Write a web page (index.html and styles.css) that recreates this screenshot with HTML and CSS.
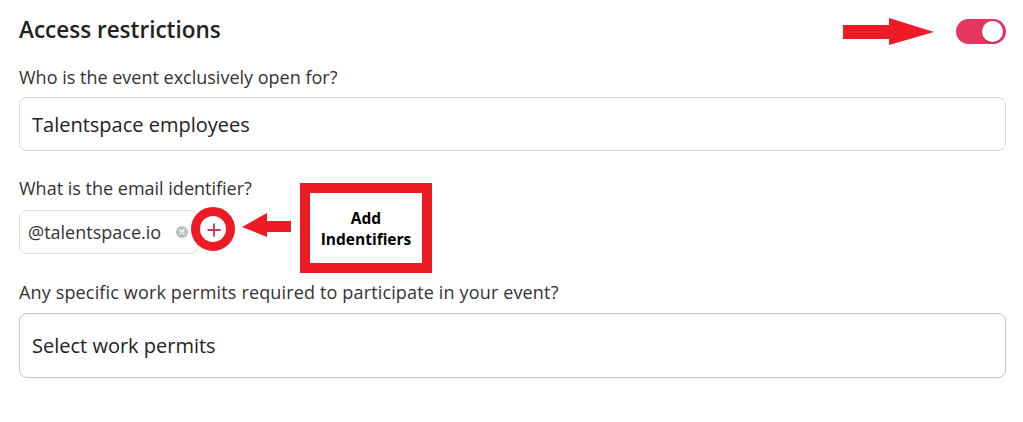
FILE: index.html
```html
<!DOCTYPE html>
<html lang="en">
<head>
<meta charset="utf-8">
<title>Access restrictions</title>
<link rel="stylesheet" href="styles.css">
</head>
<body>
<main class="panel">
  <div class="header">
    <h2 class="title">Access restrictions</h2>
    <span class="toggle"><span class="knob"></span></span>
  </div>

  <label class="label label-first">Who is the event exclusively open for?</label>
  <div class="input input-org">Talentspace employees</div>

  <label class="label label-email">What is the email identifier?</label>
  <div class="chip-row">
    <span class="chip">@talentspace.io<span class="chip-x"><svg viewBox="0 0 12 12" width="12" height="12"><circle cx="6" cy="6" r="6" fill="#bdbdbd"/><path d="M4 4 L8 8 M8 4 L4 8" stroke="#fff" stroke-width="1.4" stroke-linecap="round"/></svg></span></span>
    <button class="add-btn" type="button"><svg viewBox="0 0 14 14" width="14" height="14"><path d="M7 0.5 V13.5 M0.5 7 H13.5" stroke="#c8325c" stroke-width="1.8"/></svg></button>
  </div>

  <label class="label label-permits">Any specific work permits required to participate in your event?</label>
  <div class="input input-select">Select work permits</div>

  <svg class="arrow arrow-top" viewBox="0 0 91 27" width="91" height="27"><path d="M0 7 H46 V0 L91 14 L46 27 V21 H0 Z" fill="#ed1c24"/></svg>
  <span class="ring"></span>
  <svg class="arrow arrow-left" viewBox="0 0 49 24" width="49" height="24"><path d="M0 14 L25 0 V8 H49 V19 H25 V24 Z" fill="#ed1c24"/></svg>
  <div class="callout">Add<br>Indentifiers</div>
</main>
</body>
</html>
```

FILE: styles.css
```css
* { box-sizing: border-box; }

body {
  margin: 0;
  background: #ffffff;
  font-family: "Open Sans", "Noto Sans", sans-serif;
  color: #333333;
}

.panel {
  position: relative;
  width: 1006px;
  padding: 13px 0 40px 19px;
}

.header {
  display: flex;
  justify-content: space-between;
  align-items: flex-start;
  height: 33px;
}

.title {
  margin: 0;
  font-size: 22.5px;
  line-height: 34px;
  font-weight: 600;
  color: #222222;
}

.toggle {
  position: relative;
  display: block;
  width: 50px;
  height: 25px;
  margin-top: 6px;
  border-radius: 13px;
  background: #e73761;
}

.knob {
  position: absolute;
  top: 2px;
  right: 3px;
  width: 21px;
  height: 21px;
  border-radius: 50%;
  background: #ffffff;
  box-shadow: 0 1px 2px rgba(0, 0, 0, 0.25);
}

.label {
  display: block;
  font-size: 18px;
  line-height: 22px;
  color: #333333;
}

.label-first { margin: 20px 0 9px; }
.label-email { margin: 26px 0 11px; }
.label-permits { margin: 27px 0 10px; letter-spacing: 0.15px; }

.input {
  display: flex;
  align-items: center;
  border: 1px solid #d9d9d9;
  border-radius: 8px;
  padding: 0 12px;
  color: #222222;
}

.input-org {
  height: 54px;
  font-size: 20px;
}

.input-select {
  height: 65px;
  font-size: 20px;
  border-color: #c4c4c4;
}

.chip-row {
  display: flex;
  align-items: center;
  gap: 3px;
  height: 44px;
}

.chip {
  display: flex;
  align-items: center;
  height: 44px;
  width: 179px;
  padding: 0 9px 0 8px;
  border: 1px solid #dddddd;
  border-radius: 8px;
  font-size: 18px;
  color: #333333;
}

.chip-x {
  display: flex;
  margin-left: auto;
}

.add-btn {
  display: flex;
  align-items: center;
  justify-content: center;
  width: 26px;
  height: 26px;
  margin-top: -5px;
  padding: 0;
  border: none;
  border-radius: 50%;
  background: #ffffff;
}

/* annotations */
.arrow { position: absolute; display: block; }
.arrow-top { left: 843px; top: 18px; }
.arrow-left { left: 242px; top: 213px; }

.ring {
  position: absolute;
  left: 191px;
  top: 207px;
  width: 44px;
  height: 44px;
  border: 9px solid #ed1c24;
  border-radius: 50%;
}

.callout {
  position: absolute;
  left: 300px;
  top: 183px;
  width: 132px;
  height: 90px;
  border: 10px solid #ed1c24;
  background: #ffffff;
  display: flex;
  align-items: center;
  justify-content: center;
  text-align: center;
  font-family: "Open Sans", sans-serif;
  font-weight: 700;
  font-size: 15.5px;
  line-height: 21px;
  color: #000000;
  padding-top: 2px;
}
```
